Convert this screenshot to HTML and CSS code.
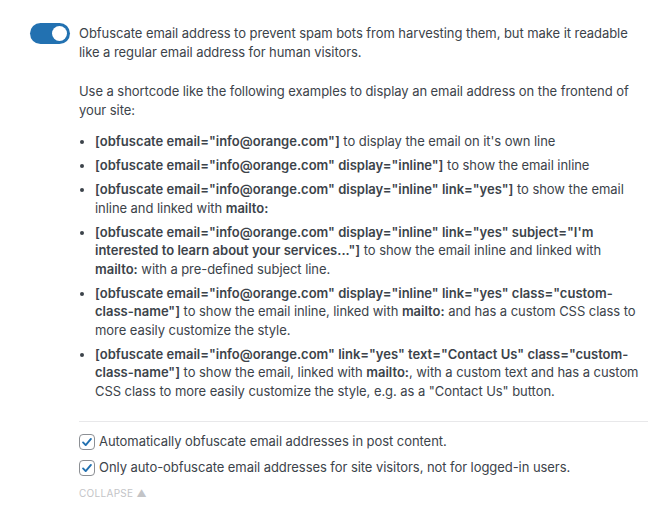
FILE: index.html
```html
<!DOCTYPE html>
<html lang="en">
<head>
  <meta charset="UTF-8">
  <title>Obfuscate Email</title>
  <link rel="stylesheet" href="styles.css">
</head>
<body>
  <div class="setting">
    <span class="toggle"><span class="knob"></span></span>
    <div class="content">
      <p class="intro">Obfuscate email address to prevent spam bots from harvesting them, but make it readable like a regular email address for human visitors.</p>
      <p class="desc">Use a shortcode like the following examples to display an email address on the frontend of your site:</p>
      <ul class="examples">
        <li><strong>[obfuscate email="info@orange.com"]</strong> to display the email on it's own line</li>
        <li><strong>[obfuscate email="info@orange.com" display="inline"]</strong> to show the email inline</li>
        <li><strong>[obfuscate email="info@orange.com" display="inline" link="yes"]</strong> to show the email inline and linked with <strong>mailto:</strong></li>
        <li><strong>[obfuscate email="info@orange.com" display="inline" link="yes" subject="I'm interested to learn about your services..."]</strong> to show the email inline and linked with <strong>mailto:</strong> with a pre-defined subject line.</li>
        <li><strong>[obfuscate email="info@orange.com" display="inline" link="yes" class="custom-class-name"]</strong> to show the email inline, linked with <strong>mailto:</strong> and has a custom CSS class to more easily customize the style.</li>
        <li><strong>[obfuscate email="info@orange.com" link="yes" text="Contact Us" class="custom-class-name"]</strong> to show the email, linked with <strong>mailto:</strong>, with a custom text and has a custom CSS class to more easily customize the style, e.g. as a "Contact Us" button.</li>
      </ul>
      <div class="options">
        <label class="option"><span class="check"><svg viewBox="0 0 16 16" width="14" height="14"><path d="M3.5 8.5l3 3 6-7" fill="none" stroke="#2271b1" stroke-width="2.2" stroke-linecap="round" stroke-linejoin="round"/></svg></span>Automatically obfuscate email addresses in post content.</label>
        <label class="option"><span class="check"><svg viewBox="0 0 16 16" width="14" height="14"><path d="M3.5 8.5l3 3 6-7" fill="none" stroke="#2271b1" stroke-width="2.2" stroke-linecap="round" stroke-linejoin="round"/></svg></span>Only auto-obfuscate email addresses for site visitors, not for logged-in users.</label>
      </div>
      <div class="collapse">COLLAPSE &#9650;</div>
    </div>
  </div>
</body>
</html>
```

FILE: styles.css
```css
/* Base */
body {
  margin: 0;
  background: #fff;
  color: #3c434a;
  font-family: Inter, "Noto Sans", sans-serif;
  font-size: 13px;
  line-height: 19px;
  letter-spacing: -0.06px;
}

/* Setting row */
.setting {
  display: flex;
  align-items: flex-start;
  gap: 9px;
  padding: 24px 23px 0 30px;
}

/* Toggle */
.toggle {
  flex: none;
  width: 40px;
  height: 21px;
  margin-top: -1px;
  border-radius: 11px;
  background: #2271b1;
  position: relative;
}

.knob {
  position: absolute;
  top: 3px;
  right: 3px;
  width: 15px;
  height: 15px;
  border-radius: 50%;
  background: #fff;
}

.content {
  flex: 1;
}

p {
  margin: 0;
}

.desc {
  margin-top: 20px;
}

/* Examples list */
.examples {
  margin: 12px 0 0;
  padding: 0 8px 0 16px;
  line-height: 18.5px;
}

.examples li {
  margin-bottom: 5.5px;
}

.examples strong {
  font-weight: 600;
  letter-spacing: 0;
}

/* Options */
.options {
  margin-top: 21px;
  border-top: 1px solid #e8e8ea;
  padding-top: 10px;
}

.option {
  display: flex;
  align-items: center;
  gap: 4px;
  margin-bottom: 7px;
}

.check {
  flex: none;
  width: 16px;
  height: 16px;
  border: 1px solid #8c8f94;
  border-radius: 4px;
  box-sizing: border-box;
  display: flex;
  align-items: center;
  justify-content: center;
}

.collapse {
  color: #c3c4c7;
  font-size: 10px;
  letter-spacing: 0.3px;
  line-height: 14px;
  margin-top: 9px;
}
```
